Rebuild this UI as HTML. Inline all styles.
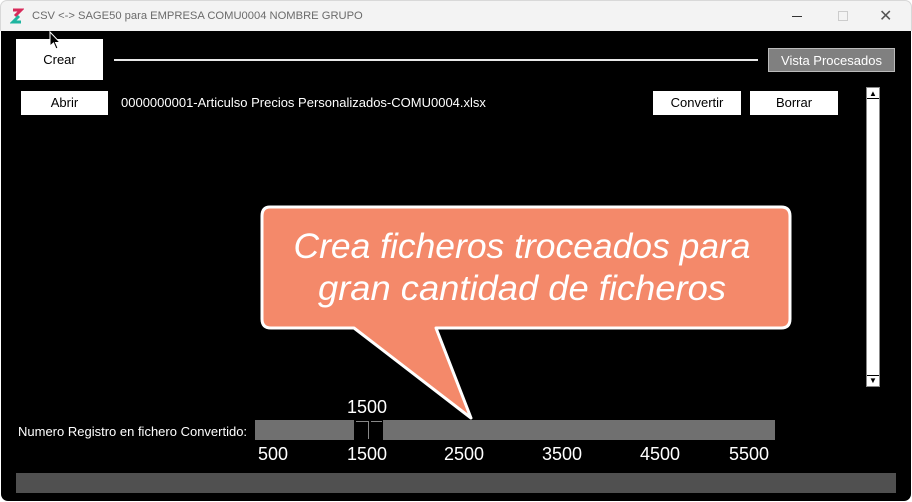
<!DOCTYPE html>
<html><head><meta charset="utf-8"><style>
*{margin:0;padding:0;box-sizing:border-box}
body{width:912px;height:502px;background:#fff;position:relative;overflow:hidden;font-family:"Liberation Sans",Arial,sans-serif}
.title{position:absolute;left:0;top:0;width:912px;height:31px;background:#f3f3f3;border:1px solid #d8d8d8;border-bottom:none;border-radius:7px 7px 0 0}
.title span{position:absolute;left:31px;top:9px;font-size:11.2px;color:#6b6b6b}
.main{position:absolute;left:1px;top:31px;width:910px;height:470px;background:#000;border-radius:0 0 7px 7px}
.a{position:absolute}
.btn{position:absolute;background:#fff;color:#000;font-size:13px;text-align:center}
.t{position:absolute;color:#fff;font-size:13px;white-space:nowrap}
.n{position:absolute;color:#fff;font-size:18px;white-space:nowrap}
</style></head><body>
<div class="title">
<svg class="a" style="left:9px;top:7px" width="14" height="16" viewBox="0 0 14 16"><path d="M3 2h8l-6 6" stroke="#d82a5a" stroke-width="3" fill="none"/><path d="M11 14H3l6-6" stroke="#1fb5a0" stroke-width="3" fill="none"/></svg>
<span>CSV &lt;-&gt; SAGE50 para EMPRESA COMU0004 NOMBRE GRUPO</span>
<div class="a" style="left:791px;top:15px;width:10px;height:1px;background:#333"></div>
<div class="a" style="left:837px;top:10px;width:10px;height:10px;border:1px solid #ccc"></div>
<div class="a" style="left:878px;top:5px;font-size:16px;color:#555">✕</div>
</div>
<div class="main"></div>
<div class="btn" style="left:16px;top:39px;width:87px;height:41px;line-height:41px">Crear</div>
<div class="a" style="left:114px;top:59px;width:644px;height:2px;background:#e8e8e8"></div>
<div class="btn" style="left:768px;top:48px;width:127px;height:24px;line-height:23px;background:#808080;color:#fff;border:1px solid #bbb">Vista Procesados</div>
<div class="btn" style="left:21px;top:91px;width:87px;height:24px;line-height:24px">Abrir</div>
<div class="t" style="left:121px;top:95px">0000000001-Articulso Precios Personalizados-COMU0004.xlsx</div>
<div class="btn" style="left:653px;top:91px;width:88px;height:24px;line-height:24px">Convertir</div>
<div class="btn" style="left:750px;top:91px;width:88px;height:24px;line-height:24px">Borrar</div>
<div class="a" style="left:866px;top:87px;width:14px;height:300px;background:#fff;border:1px solid #888"></div>
<div class="a" style="left:867px;top:98px;width:12px;height:1px;background:#000"></div>
<div class="a" style="left:867px;top:375px;width:12px;height:1px;background:#000"></div>
<div class="a" style="left:869px;top:89px;font-size:8px;color:#000">▲</div>
<div class="a" style="left:869px;top:376px;font-size:8px;color:#000">▼</div>
<svg class="a" style="left:0;top:0" width="912" height="502">
<path d="M270 207H781Q790 207 790 216V319Q790 328 781 328H436L471 418L354 328H271Q262 328 262 319V216Q262 207 270 207Z" fill="#f4896a" stroke="#fff" stroke-width="3" stroke-linejoin="round"/>
<text x="522" y="258" text-anchor="middle" fill="#fff" font-family="Liberation Sans,sans-serif" font-style="italic" font-size="35" textLength="457" lengthAdjust="spacingAndGlyphs">Crea ficheros troceados para</text>
<text x="522" y="300" text-anchor="middle" fill="#fff" font-family="Liberation Sans,sans-serif" font-style="italic" font-size="35" textLength="408" lengthAdjust="spacingAndGlyphs">gran cantidad de ficheros</text>
</svg>
<div class="n" style="left:347px;top:397px">1500</div>
<div class="t" style="left:18px;top:424px">Numero Registro en fichero Convertido:</div>
<div class="a" style="left:255px;top:420px;width:520px;height:20px;background:#707070"></div>
<div class="a" style="left:354px;top:420px;width:29px;height:20px;background:#000"></div>
<div class="a" style="left:356px;top:421px;width:12px;height:1px;background:#888"></div>
<div class="a" style="left:368px;top:421px;width:1px;height:18px;background:#888"></div>
<div class="a" style="left:371px;top:421px;width:11px;height:1px;background:#888"></div>
<div class="n" style="left:258px;top:444px">500</div>
<div class="n" style="left:347px;top:444px">1500</div>
<div class="n" style="left:444px;top:444px">2500</div>
<div class="n" style="left:542px;top:444px">3500</div>
<div class="n" style="left:640px;top:444px">4500</div>
<div class="n" style="left:729px;top:444px">5500</div>
<div class="a" style="left:16px;top:473px;width:880px;height:20px;background:#505050"></div>
<svg class="a" style="left:49px;top:31px" width="14" height="20" viewBox="0 0 14 20"><path d="M1 1V15L4.5 12L7 18L9 17L6.5 11.5H11Z" fill="#000" stroke="#fff" stroke-width="1"/></svg>
</body></html>
